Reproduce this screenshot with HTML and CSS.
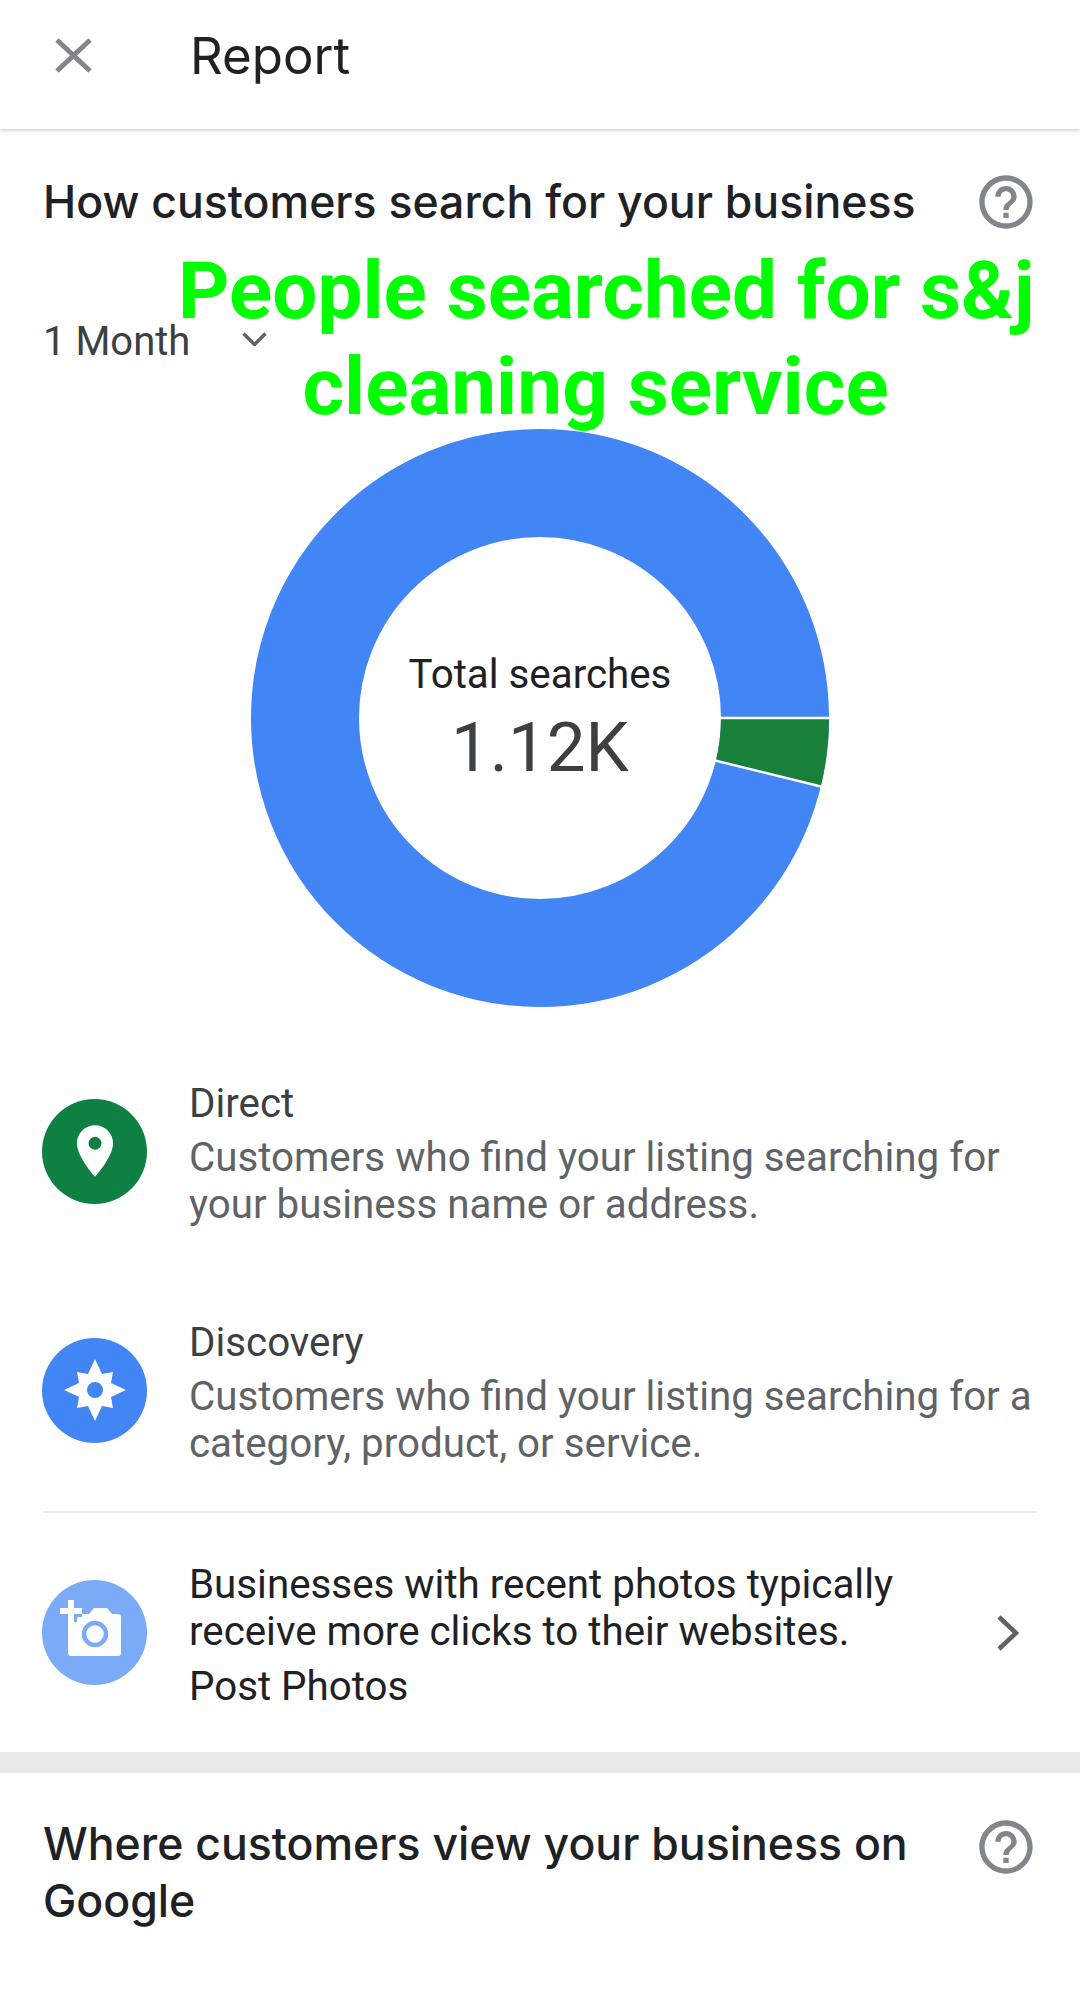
FILE: index.html
```html
<!DOCTYPE html>
<html lang="en">
<head>
    <meta charset="UTF-8">
    <meta name="viewport" content="width=device-width, initial-scale=1.0">
    <title>Report</title>
    <link rel="stylesheet" href="styles.css">
</head>
<body>
    <header class="top-bar">
        <svg class="close-icon" viewBox="0 0 37 35"><path d="M2 2L35 33M35 2L2 33"/></svg>
        <h1>Report</h1>
    </header>

    <section class="panel">
        <div class="panel-head">
            <h2>How customers search for your business</h2>
            <svg class="help-icon" viewBox="0 0 24 24"><path d="M11 18h2v-2h-2v2zm1-16C6.48 2 2 6.48 2 12s4.48 10 10 10 10-4.48 10-10S17.52 2 12 2zm0 18c-4.41 0-8-3.59-8-8s3.59-8 8-8 8 3.59 8 8-3.59 8-8 8zm0-14c-2.21 0-4 1.79-4 4h2c0-1.1.9-2 2-2s2 .9 2 2c0 2-3 1.75-3 5h2c0-2.25 3-2.5 3-5 0-2.21-1.79-4-4-4z"/></svg>
        </div>

        <div class="period">
            <span>1 Month</span>
            <svg class="chevron-down" viewBox="0 0 25 14"><path d="M1.5 1.5L12.5 12.5L23.5 1.5"/></svg>
        </div>

        <div class="annotation">
            <div>People searched for s&amp;j</div>
            <div class="annotation-second">cleaning service</div>
        </div>

        <div class="chart">
            <svg class="donut" viewBox="-289 -289 578 578">
                <circle class="donut-blue" r="235" pathLength="360"/>
                <circle class="donut-green" r="235" pathLength="360" stroke-dasharray="13.7 346.3"/>
                <path class="donut-gap" d="M170 0H290M173 42L283 69"/>
            </svg>
            <div class="chart-label">
                <div class="chart-title">Total searches</div>
                <div class="chart-value">1.12K</div>
            </div>
        </div>

        <div class="legend-row">
            <div class="badge badge-green">
                <svg viewBox="0 0 24 24" class="pin"><path fill-rule="evenodd" d="M12 2C8.13 2 5 5.13 5 9c0 5.25 7 13 7 13s7-7.75 7-13c0-3.87-3.13-7-7-7zm0 9.5a2.5 2.5 0 010-5 2.5 2.5 0 010 5z"/></svg>
            </div>
            <div class="legend-text">
                <div class="legend-name">Direct</div>
                <div class="legend-desc">Customers who find your listing searching for your business name or address.</div>
            </div>
        </div>

        <div class="legend-row legend-second">
            <div class="badge badge-blue">
                <svg viewBox="-36 -36 72 72" class="star"><path fill-rule="evenodd" d="M0-31L7-16L18-18L16-7L31 0L16 7L18 18L7 16L0 31L-7 16L-18 18L-16 7L-31 0L-16-7L-18-18L-7-16ZM8 0A8 8 0 1 0-8 0A8 8 0 1 0 8 0Z"/></svg>
            </div>
            <div class="legend-text">
                <div class="legend-name">Discovery</div>
                <div class="legend-desc">Customers who find your listing searching for a category, product, or service.</div>
            </div>
        </div>

        <div class="divider"></div>

        <div class="legend-row photo-row">
            <div class="badge badge-light">
                <svg viewBox="0 0 105 105" class="camera">
                    <path class="camera-body" d="M29 34H47L52 28H65L70 34H76a3 3 0 0 1 3 3V73a3 3 0 0 1-3 3H29a3 3 0 0 1-3-3V37a3 3 0 0 1 3-3Z"/>
                    <circle class="camera-lens" cx="53" cy="54" r="11"/>
                    <path class="camera-plus-back" d="M18 31H40M29 20V42"/>
                    <path class="camera-plus" d="M18 31H40M29 20V42"/>
                </svg>
            </div>
            <div class="legend-text">
                <div class="photo-copy">Businesses with recent photos typically receive more clicks to their websites.</div>
                <div class="photo-link">Post Photos</div>
            </div>
            <svg class="chevron-right" viewBox="0 0 24 38"><path d="M3 3L20 19L3 35"/></svg>
        </div>
    </section>

    <div class="band"></div>

    <section class="panel">
        <div class="panel-head panel-head-next">
            <h2>Where customers view your business on Google</h2>
            <svg class="help-icon" viewBox="0 0 24 24"><path d="M11 18h2v-2h-2v2zm1-16C6.48 2 2 6.48 2 12s4.48 10 10 10 10-4.48 10-10S17.52 2 12 2zm0 18c-4.41 0-8-3.59-8-8s3.59-8 8-8 8 3.59 8 8-3.59 8-8 8zm0-14c-2.21 0-4 1.79-4 4h2c0-1.1.9-2 2-2s2 .9 2 2c0 2-3 1.75-3 5h2c0-2.25 3-2.5 3-5 0-2.21-1.79-4-4-4z"/></svg>
        </div>
    </section>
</body>
</html>
```

FILE: styles.css
```css
body {
    margin: 0;
    background: #fff;
    color: #202124;
    font-family: Roboto, "Noto Sans", sans-serif;
    height: 1990px;
    overflow: hidden;
}
h1, h2 {
    margin: 0;
}
.top-bar {
    height: 111px;
    padding: 0 0 18px 55px;
    display: flex;
    align-items: center;
    gap: 98px;
    box-shadow: 0 1px 4px rgba(60, 64, 67, 0.3);
    position: relative;
}
.top-bar h1 {
    font-family: Inter, Roboto, sans-serif;
    font-size: 51px;
    font-weight: 400;
}
.close-icon {
    width: 37px;
    height: 35px;
    fill: none;
    stroke: #80868b;
    stroke-width: 5;
}
.panel {
    padding: 0 43px;
    position: relative;
}
.panel-head {
    padding-top: 45px;
    display: flex;
    justify-content: space-between;
    align-items: flex-start;
}
.panel-head h2 {
    font-family: Inter, Roboto, sans-serif;
    font-size: 44.6px;
    font-weight: 500;
    line-height: 57px;
    max-width: 900px;
}
.help-icon {
    width: 64px;
    height: 64px;
    flex: none;
    fill: #80868b;
    margin-right: -1px;
    margin-top: -4px;
}
.period {
    margin-top: 84px;
    display: flex;
    align-items: center;
    gap: 52px;
    font-size: 40px;
    line-height: 47px;
    color: #3c4043;
}
.chevron-down {
    width: 25px;
    height: 14px;
    fill: none;
    stroke: #5f6368;
    stroke-width: 3.5;
    margin-top: -6px;
}
.annotation {
    position: absolute;
    top: 114px;
    left: 178px;
    width: 856px;
    text-align: center;
    color: #00ff00;
    font-family: Roboto, "Liberation Sans", sans-serif;
    font-weight: 700;
    font-size: 80px;
    line-height: 96px;
    white-space: nowrap;
}
.annotation-second {
    padding-right: 21px;
}
.chart {
    margin-top: 64px;
    display: grid;
    justify-items: center;
    align-items: center;
}
.donut, .chart-label {
    grid-area: 1 / 1;
}
.donut {
    width: 578px;
    height: 578px;
    display: block;
}
.donut circle {
    fill: none;
    stroke-width: 108;
}
.donut-blue {
    stroke: #4285f4;
}
.donut-green {
    stroke: #188038;
}
.donut-gap {
    stroke: #fff;
    stroke-width: 2.5;
    fill: none;
}
.chart-label {
    padding-top: 4px;
    text-align: center;
}
.chart-title {
    font-size: 40.3px;
    line-height: 47px;
}
.chart-value {
    font-size: 69px;
    line-height: 84px;
    margin-top: 8px;
    color: #3c4043;
}
.legend-row {
    margin-top: 73px;
    display: flex;
    align-items: center;
    gap: 42px;
}
.legend-second {
    margin-top: 91px;
}
.badge {
    width: 105px;
    height: 105px;
    margin: -6px 0 0 -1px;
    border-radius: 50%;
    flex: none;
    display: flex;
    align-items: center;
    justify-content: center;
}
.badge svg {
    display: block;
}
.badge-green {
    background: #0f8043;
}
.badge-blue {
    background: #4285f4;
}
.badge-light {
    background: #7baaf7;
}
.pin {
    width: 62px;
    height: 62px;
    fill: #fff;
}
.star {
    width: 72px;
    height: 72px;
    fill: #fff;
}
.camera {
    width: 105px;
    height: 105px;
}
.camera-body {
    fill: #fff;
}
.camera-lens {
    fill: #fff;
    stroke: #7baaf7;
    stroke-width: 4.5;
}
.camera-plus-back {
    fill: none;
    stroke: #7baaf7;
    stroke-width: 12;
}
.camera-plus {
    fill: none;
    stroke: #fff;
    stroke-width: 6;
}
.legend-text {
    flex: 1;
    font-size: 40.3px;
    line-height: 47px;
}
.legend-name {
    color: #3c4043;
}
.legend-desc {
    color: #5f6368;
    margin-top: 7px;
}
.divider {
    height: 2px;
    background: #e8eaed;
    margin-top: 44px;
}
.photo-row {
    margin-top: 48px;
}
.photo-copy {
    color: #202124;
}
.photo-link {
    color: #202124;
    margin-top: 8px;
}
.chevron-right {
    width: 24px;
    height: 38px;
    fill: none;
    stroke: #5f6368;
    stroke-width: 4.5;
    flex: none;
    margin: -6px 17px 0 0;
}
.band {
    height: 21px;
    margin-top: 42px;
    background: #e8eaed;
}
.panel-head-next {
    padding-top: 43px;
}
.panel-head-next .help-icon {
    margin-top: -1px;
}
```
